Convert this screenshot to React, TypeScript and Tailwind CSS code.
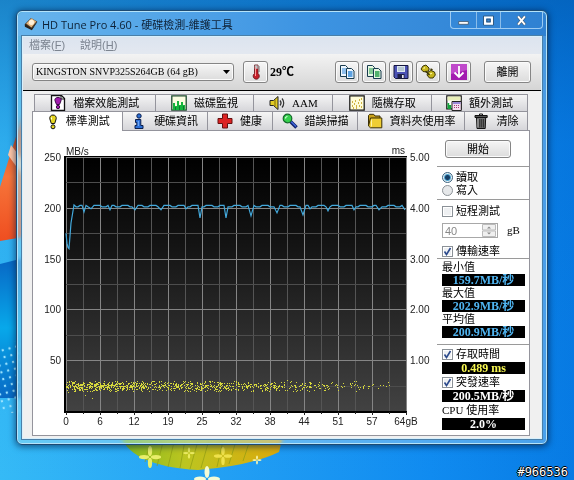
import type { ReactNode } from "react";

const SANS = "font-['Liberation_Sans','Noto_Sans_CJK_TC',sans-serif]";

const PLOT = { x: 33, y: 26, w: 340, h: 254, max: 250 };

// [offset inside the plot, MB/s]
const dips: [number, number][] = [
  [18, 196], [25, 199], [44, 198], [69, 198], [95, 198], [120, 199], [134, 190], [160, 190],
  [185, 192], [211, 195], [237, 193], [244, 199], [262, 197], [288, 198], [313, 198], [339, 198],
];

function speedY(v: number) {
  return PLOT.y + ((PLOT.max - v) * PLOT.h) / PLOT.max;
}

function speedLine() {
  const pts: [number, number][] = [[0, 175], [1, 165], [2, 161], [3, 159.7], [5, 185], [8, 202.9]];
  for (let x = 10; x <= PLOT.w; x += 2) {
    const near = dips.find(([dx]) => Math.abs(dx - x) < 2);
    if (near) pts.push([near[0], near[1]]);
    else pts.push([x, x % 14 < 8 ? 202.4 : 201]);
  }
  return pts.map(([x, v]) => `${PLOT.x + x},${speedY(v).toFixed(1)}`).join(" ");
}

function accessDots() {
  const dots: [number, number][] = [[19, 264], [26, 267]];
  let seed = 17;
  const rand = () => {
    seed = (seed * 16807) % 2147483647;
    return seed / 2147483647;
  };
  for (let i = 0; i < 1900; i++) {
    const x = rand() * 328;
    const spread = (rand() + rand() - 1) * 6;
    if (rand() > 1.02 - x / 330) continue;
    dots.push([Math.round(x), Math.round(255 + spread)]);
  }
  return dots.map(([x, y]) => `M${PLOT.x + x} ${y}h1`).join("");
}

const SPEED = speedLine();
const DOTS = accessDots();

function Chart() {
  const cols = Array.from({ length: 21 }, (_, i) => i);
  const rows = Array.from({ length: 11 }, (_, i) => i);
  return (
    <svg viewBox="0 0 404 304" className={`block w-full ${SANS}`} fontSize="10" fill="#222" role="img" aria-label="HD Tune">
      <defs>
        <linearGradient id="plot" x2="0" y2="1">
          <stop stopColor="#000" />
          <stop offset="0.35" stopColor="#141414" />
          <stop offset="1" stopColor="#424242" />
        </linearGradient>
      </defs>
      <rect x="31" y="25" width="343" height="257" fill="#000" />
      <rect x="33" y="26" width="340" height="254" fill="url(#plot)" />
      {cols.map((i) => (
        <path key={i} d={`M${PLOT.x + i * 17 + 0.5} 26V280`} stroke={i % 2 ? "#555" : "#858585"} />
      ))}
      {rows.slice(0, 10).map((i) => (
        <path key={i} d={`M33 ${Math.round(PLOT.y + i * 25.4) + 0.5}H373`} stroke={i % 2 ? "#4d4d4d" : "#858585"} />
      ))}
      {cols.map((i) => (
        <path key={i} d={`M${PLOT.x + i * 17 + 0.5} 281v${i % 2 ? 2 : 3}`} stroke="#222" />
      ))}
      <polyline points={SPEED} fill="none" stroke="#43a9dc" strokeWidth="1.2" />
      <path d={DOTS} transform="translate(0 .5)" stroke="#d6d83c" fill="none" shapeRendering="crispEdges" />
      <text x="33" y="24">MB/s</text>
      <text x="372" y="23" textAnchor="end">ms</text>
      {["250", "200", "150", "100", "50"].map((t, i) => (
        <text key={t} x="28" y={Math.round(30 + i * 50.8)} textAnchor="end">{t}</text>
      ))}
      {["5.00", "4.00", "3.00", "2.00", "1.00"].map((t, i) => (
        <text key={t} x="377" y={Math.round(30 + i * 50.8)}>{t}</text>
      ))}
      {["0", "6", "12", "19", "25", "32", "38", "44", "51", "57", "64gB"].map((t, i) => (
        <text key={t} x={PLOT.x + i * 34} y="294" textAnchor="middle">{t}</text>
      ))}
    </svg>
  );
}

function Icon({ children, size = "size-4" }: { children: ReactNode; size?: string }) {
  return (
    <svg viewBox="0 0 16 16" className={`${size} shrink-0`} fill="none" aria-hidden>
      {children}
    </svg>
  );
}

const bulb = (fill: string) => (
  <>
    <path d="M8 1C5.600 1 4.500 2.800 4.800 4.800L6.300 9.500h3.400l1.500-4.700C11.500 2.800 10.400 1 8 1Z" fill={fill} stroke="#111" />
    <path d="M6.500 3.500v2" stroke="#fff" />
    <circle cx="8" cy="12.800" r="2" fill={fill} stroke="#111" />
  </>
);

const icons = {
  file: (
    <>
      <path d="M1.500.500h10l3 3v12h-13Z" fill="#fff" stroke="#111" strokeWidth="1.300" />
      <path d="M11 .500v3.500h3.500" stroke="#111" />
      <path d="M8 2.500c-2.500 0-3.500 1.500-3 3.200L6.500 9.500h3l1.500-3.800c.5-1.700-.5-3.200-3-3.200Z" fill="#a21caf" stroke="#3b0a45" />
      <circle cx="8" cy="12" r="1.700" fill="#a21caf" stroke="#3b0a45" />
    </>
  ),
  monitor: (
    <>
      <path d="M.800.800h14.400v14.400H.800Z" fill="#fbfde0" stroke="#1c4a2c" strokeWidth="1.300" />
      <path d="M2 15V8h2v3h2V6h2v4h2V7h2v3h2v5Z" fill="#14b53c" />
      <path d="M4.500 15v-3M8.500 15v-4M12.500 15v-4" stroke="#0a7a2a" />
    </>
  ),
  speaker: (
    <>
      <path d="M1 5.500h3.500L9 1.500v13l-4.500-4H1Z" fill="#e3cc25" stroke="#222" />
      <path d="M6 5v6" stroke="#7d6b0c" />
      <path d="M11 5.500c1.300 1.500 1.300 3.500 0 5M13 3.500c2.300 2.500 2.300 6.500 0 9" stroke="#333" strokeWidth="1.200" />
    </>
  ),
  random: (
    <>
      <path d="M.800.800h14.400v14.400H.800Z" fill="#fffdd8" stroke="#111" strokeWidth="1.200" />
      <path d="M3 11h1M5 9h1M4 13h1M7 11h1M6 6h1M9 8h1M10 5h1M12 4h1M12 8h1M10 11h1M12 12h1M7 13h1M3 7h1" stroke="#c09b12" strokeWidth="1.400" />
    </>
  ),
  extra: (
    <>
      <path d="M.800.800h14.400v13H.800Z" fill="#fff" stroke="#111" strokeWidth="1.200" />
      <path d="M1.500 1.500h13v4h-13Z" fill="#e9efb9" />
      <path d="M1.500 14V8h1.700v2h2v4Z" fill="#12a33a" />
      <path d="M6 6.500h9.300v9H6Z" fill="#f4dff0" stroke="#222" />
      <path d="M7 8h7.500" stroke="#7b6bd0" strokeWidth="1.500" />
      <path d="M8 10.500h1m1 0h1m1 0h1M8 12.500h1m1 0h1m1 0h1" stroke="#a33a74" strokeWidth="1.200" />
    </>
  ),
  info: (
    <>
      <circle cx="8" cy="3" r="2.200" fill="#2b6fd6" stroke="#0b1f4d" />
      <path d="M4.500 6.500h5.300v6H12v3H4v-3h1.800V9.500H4.500Z" fill="#2b6fd6" stroke="#0b1f4d" />
      <path d="M7.300 8v5" stroke="#7fb5ff" />
    </>
  ),
  health: (
    <path d="M5.500 1h5v4.500H15v5h-4.500V15h-5v-4.500H1v-5h4.500Z" fill="#dc2323" stroke="#641010" />
  ),
  scan: (
    <>
      <path d="m8.500 8.500 6 6" stroke="#11246e" strokeWidth="3.500" />
      <path d="m9 8.500 5 5" stroke="#4169e1" strokeWidth="1.300" />
      <circle cx="5.500" cy="5.500" r="4.300" fill="#35d04d" stroke="#14682a" strokeWidth="1.200" />
      <path d="M3.500 5.500c0-1.200.8-2 2-2" stroke="#d6ffdc" strokeWidth="1.200" />
    </>
  ),
  folder: (
    <>
      <path d="M1.500 13V2.500l1.200-1.200h4L8 3h5v2" fill="#caa21b" stroke="#3b2f05" />
      <path d="M3.500 5h11.300v9.800H3.500L1.500 13Z" fill="#efce35" stroke="#3b2f05" />
      <path d="M4.500 6.500v7" stroke="#fff4a8" />
    </>
  ),
  trash: (
    <>
      <path d="M3.500 4.500h9.200l-.5 11H4Z" fill="#707070" stroke="#111" />
      <path d="M6.200 6v8.500M8.200 6v8.500M10.300 6v8.500" stroke="#222" />
      <path d="M5 6v8.500" stroke="#bbb" />
      <path d="M2 2.500h12.200v2H2Z" fill="#555" stroke="#111" />
      <path d="M6.500 2V1h3v1" stroke="#111" />
    </>
  ),
  thermo: (
    <>
      <path d="M6.500 1h3.500v8.500c2.400 1.800 1.300 5.700-1.700 5.700s-4.300-3.900-1.800-5.700Z" fill="#c41f2a" stroke="#5d1015" strokeWidth=".8" />
      <path d="M6.700 1.300h3v3.500h-3Z" fill="#b9c4c6" />
      <path d="M7.500 3v9" stroke="#ff9b9b" />
      <path d="M10.500 3h1.500M10.500 5h1.500M10.500 7h1.500" stroke="#333" strokeWidth=".7" />
    </>
  ),
  save: (
    <>
      <path d="M1 1.500h14v13H2.500L1 13Z" fill="#4b52b5" stroke="#15163f" />
      <path d="M4 2h8v6H4Z" fill="#dbe6ee" />
      <path d="M5 4h6M5 6h6" stroke="#8fa6b8" />
      <path d="M4.500 10h7v4.500h-7Z" fill="#1d1f45" />
      <path d="M9 11h1.700v3H9Z" fill="#e8e8f0" />
    </>
  ),
  chain: (
    <>
      <path d="M3 2 6 1l3 3v2l-2.500 2L3 7.500 1 5Z" fill="#c6b61e" stroke="#3d3704" />
      <path d="m8 8 3-1.500 3.500 1.500.8 3-2.300 3H9.500L7 11Z" fill="#c6b61e" stroke="#3d3704" />
      <path d="m5.500 7 4 4M10.500 5l2 1" stroke="#3d3704" strokeWidth="1.500" />
      <path d="M3.500 4.500 5 3.500M10 10l2-.8" stroke="#fff6a0" strokeWidth="1.200" />
    </>
  ),
  down: (
    <>
      <path d="M0 0h16v16H0Z" fill="#a31bb0" />
      <path d="M0 0h16v6L0 10Z" fill="#c04acb" />
      <path d="M8 2v11M3.500 8.500 8 13l4.500-4.500" stroke="#fff" strokeWidth="1.800" />
    </>
  ),
};

const copyIcon = (line: string, fill: string) => (
  <>
    <path d="M1.500 1.500h5l2 2v9h-7Z" fill={fill} stroke="#173a4e" />
    <path d="M3 5h4M3 7h4M3 9h4" stroke={line} strokeWidth="1.200" />
    <path d="M7.500 4.500h5l2.500 2.500v7.500H7.500Z" fill={fill} stroke="#173a4e" />
    <path d="M9 8h4.500M9 10h4.500M9 12h4.500" stroke={line} strokeWidth="1.300" />
  </>
);

const tools = [
  { label: "copy text", icon: copyIcon("#2e86d8", "#eef7ff") },
  { label: "copy image", icon: copyIcon("#1f9b46", "#e6f7e2") },
  { label: "save", icon: icons.save },
  { label: "options", icon: icons.chain },
];

const bevel =
  "flex items-center justify-center rounded-[3px] border border-[#858585] bg-linear-to-b from-[#f6f6f6] to-[#dcdcdc] shadow-[inset_0_0_0_1px_#fbfbfb]";

function Tab({ icon, label, grow, className = "" }: { icon: ReactNode; label: string; grow: string; className?: string }) {
  return (
    <button
      type="button"
      role="tab"
      aria-selected={false}
      className={`flex items-center justify-center gap-[7px] overflow-hidden whitespace-nowrap border-t border-r border-[#94949c] bg-linear-to-b from-[#f5f5f5] to-[#d6d6da] ${grow} ${className}`}
    >
      <Icon>{icon}</Icon>
      {label}
    </button>
  );
}

function Value({ color, children }: { color: string; children: ReactNode }) {
  return (
    <output className={`mr-1 flex h-3 items-center justify-center overflow-hidden whitespace-nowrap bg-black text-[12px] font-bold ${color}`}>
      {children}
    </output>
  );
}

function Check({ label, checked = false, className }: { label: string; checked?: boolean; className: string }) {
  return (
    <label className={`flex items-center gap-[3px] whitespace-nowrap ${className}`}>
      <span className="relative flex size-[11px] shrink-0">
        <input type="checkbox" defaultChecked={checked} className="peer size-[11px] appearance-none border border-[#8b9197] bg-[#eef0f2] shadow-[inset_0_0_0_1px_#fff]" />
        <svg viewBox="0 0 11 11" className="pointer-events-none absolute inset-0 hidden peer-checked:block" fill="none" aria-hidden>
          <path d="m2.500 5.500 2 3 4-6.500" stroke="#2c4a8c" strokeWidth="1.600" />
        </svg>
      </span>
      {label}
    </label>
  );
}

function Radio({ label, checked = false }: { label: string; checked?: boolean }) {
  return (
    <label className="flex h-[13px] items-center gap-[3px]">
      <input
        type="radio"
        name="mode"
        defaultChecked={checked}
        className="size-[11px] shrink-0 appearance-none rounded-full border border-[#8b9197] bg-[#e6e8ea] checked:border-[#3d6480] checked:bg-[radial-gradient(circle,#173f66_0_2px,#4ea3cf_3px,#e6f1f7_4px)]"
      />
      {label}
    </label>
  );
}

function Stat({ label, value }: { label: string; value: string }) {
  return (
    <>
      <div className="flex h-[14px] items-center">{label}</div>
      <Value color="text-[#4fb4f0]">{value}</Value>
    </>
  );
}

function SidePanel() {
  return (
    <div className="flex w-[92px] shrink-0 flex-col text-[11px] leading-none">
      <button type="button" className={`mt-[9px] ml-2 h-[18px] w-[66px] ${bevel}`}>開始</button>
      <div className="mt-2 border-t border-[#9a9a9a] pt-1 pb-[2px] pl-[5px]">
        <Radio label="讀取" checked />
        <Radio label="寫入" />
      </div>
      <div className="border-t border-[#9a9a9a] pt-1 pl-[5px]">
        <Check label="短程測試" className="h-[14px]" />
        <div className="mt-[5px] flex h-[15px] items-center gap-[9px]">
          <div className="flex h-full w-14 items-center border border-[#a8a8a8] pr-px">
            <input aria-label="gB" disabled defaultValue="40" className={`w-full min-w-0 pl-[2px] text-[11px] text-[#888] ${SANS}`} />
            <svg viewBox="0 0 14 13" className="h-[13px] w-[14px] shrink-0" aria-hidden>
              <path d="M.5.5h13v5.500H.5ZM.5 7h13v5.500H.5Z" fill="#f0f0f0" stroke="#bbb" />
              <path d="m5 4.500 2-2 2 2ZM5 8.500l2 2 2-2Z" fill="#888" />
            </svg>
          </div>
          <span className="text-[11px]">gB</span>
        </div>
        <Check label="傳輸速率" checked className="mt-[6px] h-[14px]" />
      </div>
      <div className="border-t border-[#9a9a9a] pt-px pb-[6px] pl-[5px]">
        <Stat label="最小值" value="159.7MB/秒" />
        <Stat label="最大值" value="202.9MB/秒" />
        <Stat label="平均值" value="200.9MB/秒" />
      </div>
      <div className="border-t border-[#9a9a9a] pt-px pl-[5px]">
        <Check label="存取時間" checked className="h-4" />
        <Value color="text-[#f7f750]">0.489 ms</Value>
        <Check label="突發速率" checked className="h-4" />
        <Value color="text-white">200.5MB/秒</Value>
        <div className="flex h-4 items-center whitespace-nowrap">CPU 使用率</div>
        <Value color="text-white">2.0%</Value>
      </div>
    </div>
  );
}

function Petals({ x, y, s, fill }: { x: number; y: number; s: number; fill: string }) {
  return (
    <g transform={`translate(${x} ${y}) scale(${s})`} fill={fill}>
      <ellipse cx="-7" rx="6" ry="2.500" />
      <ellipse cx="7" rx="6" ry="2.500" />
      <ellipse cy="-7" rx="2.500" ry="6" />
      <ellipse cy="7" rx="2.500" ry="6" />
    </g>
  );
}

function Wallpaper() {
  return (
    <svg viewBox="0 0 574 480" preserveAspectRatio="none" className="absolute inset-0 size-full" aria-hidden>
      <defs>
        <linearGradient id="sky" x2="1" y2="0">
          <stop stopColor="#35baf6" />
          <stop offset="0.3" stopColor="#27a5f5" />
          <stop offset="0.75" stopColor="#108bf0" />
          <stop offset="1" stopColor="#077be4" />
        </linearGradient>
        <linearGradient id="dusk" x2="0" y2="1">
          <stop stopColor="#004e9c" stopOpacity=".5" />
          <stop offset="0.3" stopColor="#0058b5" stopOpacity=".14" />
          <stop offset="1" stopColor="#0070d0" stopOpacity="0" />
        </linearGradient>
        <linearGradient id="flag" x2="0" y2="1">
          <stop stopColor="#c33812" />
          <stop offset="0.5" stopColor="#f6753a" />
          <stop offset="1" stopColor="#ef4e20" />
        </linearGradient>
        <linearGradient id="wave" x2="0" y2="1">
          <stop stopColor="#0866c4" />
          <stop offset="0.5" stopColor="#08a8ea" />
          <stop offset="1" stopColor="#0869c4" />
        </linearGradient>
        <linearGradient id="grass" x2="1" y2="0">
          <stop stopColor="#7fb81f" />
          <stop offset="0.4" stopColor="#bcc520" />
          <stop offset="1" stopColor="#dca80c" />
        </linearGradient>
        <pattern id="dots" width="7" height="7" patternUnits="userSpaceOnUse" patternTransform="rotate(-15)">
          <circle cx="3" cy="3" r="1.200" fill="#9be4ff" />
        </pattern>
      </defs>
      <path d="M0 0h574v480H0Z" fill="url(#sky)" />
      <path d="M0 0h574v480H0Z" fill="url(#dusk)" />
      <path d="M0 187Q10 155 24 112V237L0 241Z" fill="url(#flag)" />
      <path d="m8 155 16 22v-15L11 145Z" fill="#ffc6a5" />
      <path d="M0 264 24 258v140H0Z" fill="url(#wave)" />
      <path d="M0 347 24 338v75H0Z" fill="url(#dots)" />
      <path d="M119 432Q128 466 198 470Q250 466 279 452L284 432Z" fill="url(#grass)" />
      <path d="m145 462 4-16m8 20 6-24m5 25 6-25m6 26 5-28m5 29 8-28m3 27 8-28m8 27 6-26m6 23 7-23m7 20 6-18" stroke="#8f9c14" fill="none" opacity=".7" />
      <Petals x={150} y={457} s={0.85} fill="#e9ee6a" />
      <Petals x={223} y={456} s={0.7} fill="#efe14b" />
      <Petals x={189} y={453} s={0.45} fill="#ecec62" />
      <Petals x={257} y={460} s={0.35} fill="#f7f6b0" />
      <Petals x={207} y={479} s={1} fill="#f4fbd5" />
    </svg>
  );
}

export default function App() {
  return (
    <div className="relative min-h-screen overflow-hidden bg-[#1890ee] pt-[10px] pr-[26px] pb-[34px] pl-4 font-['Liberation_Serif','Noto_Sans_CJK_TC',serif] text-[11px] leading-none text-black">
      <Wallpaper />

      <main className="relative rounded-md border border-[#1d4a72] bg-linear-to-r from-[#9be0f5]/50 via-[#b4dcf5]/45 via-50% to-[#8cc4f0]/50 px-[5px] pb-[5px] shadow-[inset_0_0_0_1px_#b4e3fa,0_1px_6px_1px_rgb(0_30_70/0.6)] backdrop-blur-[2px]">
        <header className="-mx-[4px] mt-px flex h-6 items-start rounded-t-md bg-linear-to-r from-[#68b5ed] via-[#3d94e2] via-55% to-[#2f81d2] pl-[6px]">
          <div className="flex h-full flex-1 items-center gap-1 font-['Open_Sans','Noto_Sans_CJK_TC',sans-serif] text-[11px] whitespace-nowrap text-[#0e2136]">
            <Icon size="size-[14px]">
              <path d="M1 8 8 1l7 4-6 9-8-4Z" fill="#4b3a28" />
              <path d="m2.500 7.500 6-6L14 5l-5.500 7Z" fill="#e7b981" />
              <circle cx="8.500" cy="6" r="3" fill="#fff1da" />
              <path d="M1 8v3l8 4 6-9V5l-6 8Z" fill="#2a2119" />
            </Icon>
            <h1>HD Tune Pro 4.60 - 硬碟檢測-維護工具</h1>
          </div>
          <div className="mr-[3px] flex h-[17px] w-[93px] rounded-b border border-t-0 border-[#9bcaf2]">
            <button type="button" aria-label="minimize" className="flex w-[26px] items-center justify-center border-r border-[#8abdea]">
              <Icon size="size-[11px]"><path d="M1 9.500h14v4H1Z" fill="#fff" stroke="#345" /></Icon>
            </button>
            <button type="button" aria-label="maximize" className="flex w-6 items-center justify-center border-r border-[#8abdea]">
              <Icon size="size-[11px]">
                <path d="M.8 1.500h14.400v13H.8Z" stroke="#345" />
                <path d="M3 3.500h10v9H3Z" stroke="#fff" strokeWidth="3" />
                <path d="M5.500 6h5v4h-5Z" stroke="#345" />
              </Icon>
            </button>
            <button type="button" aria-label="close" className="flex flex-1 items-center justify-center">
              <Icon size="size-[11px]">
                <path d="m3 2 10 12M13 2 3 14" stroke="#345" strokeWidth="4.500" />
                <path d="m3 2 10 12M13 2 3 14" stroke="#fff" strokeWidth="3" />
              </Icon>
            </button>
          </div>
        </header>

        <div className="border border-[#d8f0fc] bg-[#f0f0f0] pb-[2px] outline outline-[#4a7fa8]">
          <nav className={`flex h-[17px] items-center gap-[15px] bg-linear-to-b from-[#dce4ef] to-[#e3e8f0] pl-[6px] text-[#7c8490] ${SANS}`}>
            <button type="button">檔案(<u>F</u>)</button>
            <button type="button">說明(<u>H</u>)</button>
          </nav>

          <div className="flex h-[37px] items-center border-b border-black bg-linear-to-b from-[#f3f3f3] to-[#d5d5d5] pr-[10px] pl-[9px]">
            <div className="relative w-[202px] shrink">
              <select aria-label="drive" className={`h-[18px] w-full appearance-none pl-[3px] text-[10px] ${bevel}`}>
                <option>KINGSTON SNVP325S264GB (64 gB)</option>
              </select>
              <svg viewBox="0 0 7 4" className="pointer-events-none absolute top-[7px] right-1 h-1 w-[7px]" aria-hidden>
                <path d="M0 0h7L3.500 4Z" />
              </svg>
            </div>
            <button type="button" aria-label="temperature" className={`ml-[9px] h-[22px] w-[25px] ${bevel}`}>
              <Icon>{icons.thermo}</Icon>
            </button>
            <span className="ml-[2px] text-[12px] font-bold">29℃</span>
            <div className="ml-auto flex gap-[3px]">
              {tools.map((t) => (
                <button key={t.label} type="button" aria-label={t.label} className={`h-[22px] w-6 ${bevel}`}>
                  <Icon>{t.icon}</Icon>
                </button>
              ))}
            </div>
            <button type="button" aria-label="download" className={`ml-[6px] h-[22px] w-[25px] ${bevel}`}>
              <Icon>{icons.down}</Icon>
            </button>
            <button type="button" className={`ml-[13px] h-[22px] w-[47px] ${bevel}`}>離開</button>
          </div>

          <div className="mt-[3px] mr-[11px] ml-[9px]">
            <div role="tablist" className="mx-[2px] flex h-[17px] border-l border-[#94949c]">
              <Tab icon={icons.file} label="檔案效能測試" grow="flex-[121_1_0px]" />
              <Tab icon={icons.monitor} label="磁碟監視" grow="flex-[99_1_0px]" />
              <Tab icon={icons.speaker} label="AAM" grow="flex-[79_1_0px]" />
              <Tab icon={icons.random} label="隨機存取" grow="flex-[99_1_0px]" />
              <Tab icon={icons.extra} label="額外測試" grow="flex-[96_1_0px]" />
            </div>
            <div role="tablist" className="relative z-10 -mb-px flex h-5 pr-[2px]">
              <button type="button" role="tab" aria-selected className="flex flex-[90_1_0px] items-center justify-center gap-[5px] border-t border-r border-l border-[#94949c] bg-white whitespace-nowrap">
                <Icon>{bulb("#e6d620")}</Icon>
                標準測試
              </button>
              <Tab icon={icons.info} label="硬碟資訊" grow="flex-[85_1_0px]" className="border-b" />
              <Tab icon={icons.health} label="健康" grow="flex-[65_1_0px]" className="border-b" />
              <Tab icon={icons.scan} label="錯誤掃描" grow="flex-[86_1_0px]" className="border-b" />
              <Tab icon={icons.folder} label="資料夾使用率" grow="flex-[107_1_0px]" className="border-b" />
              <Tab icon={icons.trash} label="清除" grow="flex-[63_1_0px]" className="border-b" />
            </div>
            <section className="flex items-start border border-[#94949c] bg-white">
              <div className="min-w-0 flex-1">
                <Chart />
              </div>
              <SidePanel />
            </section>
          </div>
        </div>
      </main>

      <p className="absolute right-[6px] bottom-[2px] font-['DejaVu_Sans_Mono',monospace] text-[12px] text-white [text-shadow:1px_0_#000,-1px_0_#000,0_1px_#000,0_-1px_#000]">
        #966536
      </p>
    </div>
  );
}
